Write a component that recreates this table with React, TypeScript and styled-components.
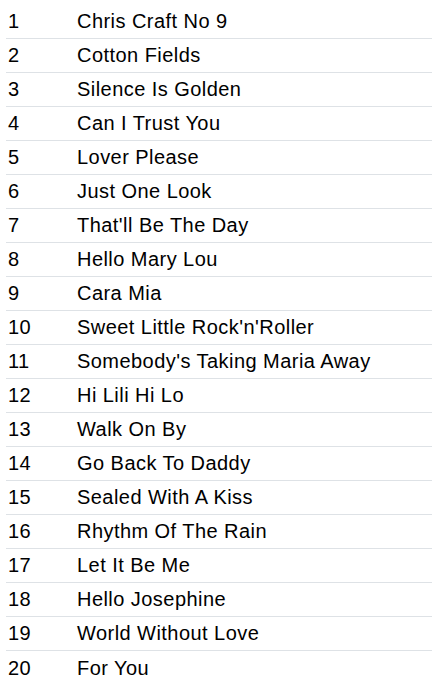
import React from "react";
import styled, { createGlobalStyle } from "styled-components";

const GlobalStyle = createGlobalStyle`
  body {
    margin: 0;
    background: #fff;
    font-family: "Liberation Sans", Arial, sans-serif;
    color: #000;
  }
`;

const Table = styled.div`
  display: flex;
  flex-direction: column;
  padding: 5px 0 0 6px;
`;

const Row = styled.div<{ $last?: boolean }>`
  display: flex;
  align-items: center;
  height: 34px;
  box-sizing: border-box;
  border-bottom: ${({ $last }) => ($last ? "none" : "1px solid #dee2e6")};
  font-size: 20px;
  letter-spacing: 0.45px;
`;

const Num = styled.span`
  width: 71px;
  padding-left: 2px;
  box-sizing: border-box;
`;

const Title = styled.span`
  flex: 1;
  white-space: nowrap;
`;

const songs = [
  "Chris Craft No 9",
  "Cotton Fields",
  "Silence Is Golden",
  "Can I Trust You",
  "Lover Please",
  "Just One Look",
  "That'll Be The Day",
  "Hello Mary Lou",
  "Cara Mia",
  "Sweet Little Rock'n'Roller",
  "Somebody's Taking Maria Away",
  "Hi Lili Hi Lo",
  "Walk On By",
  "Go Back To Daddy",
  "Sealed With A Kiss",
  "Rhythm Of The Rain",
  "Let It Be Me",
  "Hello Josephine",
  "World Without Love",
  "For You",
];

export default function App() {
  return (
    <>
      <GlobalStyle />
      <Table>
        {songs.map((title, i) => (
          <Row key={title} $last={i === songs.length - 1}>
            <Num>{i + 1}</Num>
            <Title>{title}</Title>
          </Row>
        ))}
      </Table>
    </>
  );
}
